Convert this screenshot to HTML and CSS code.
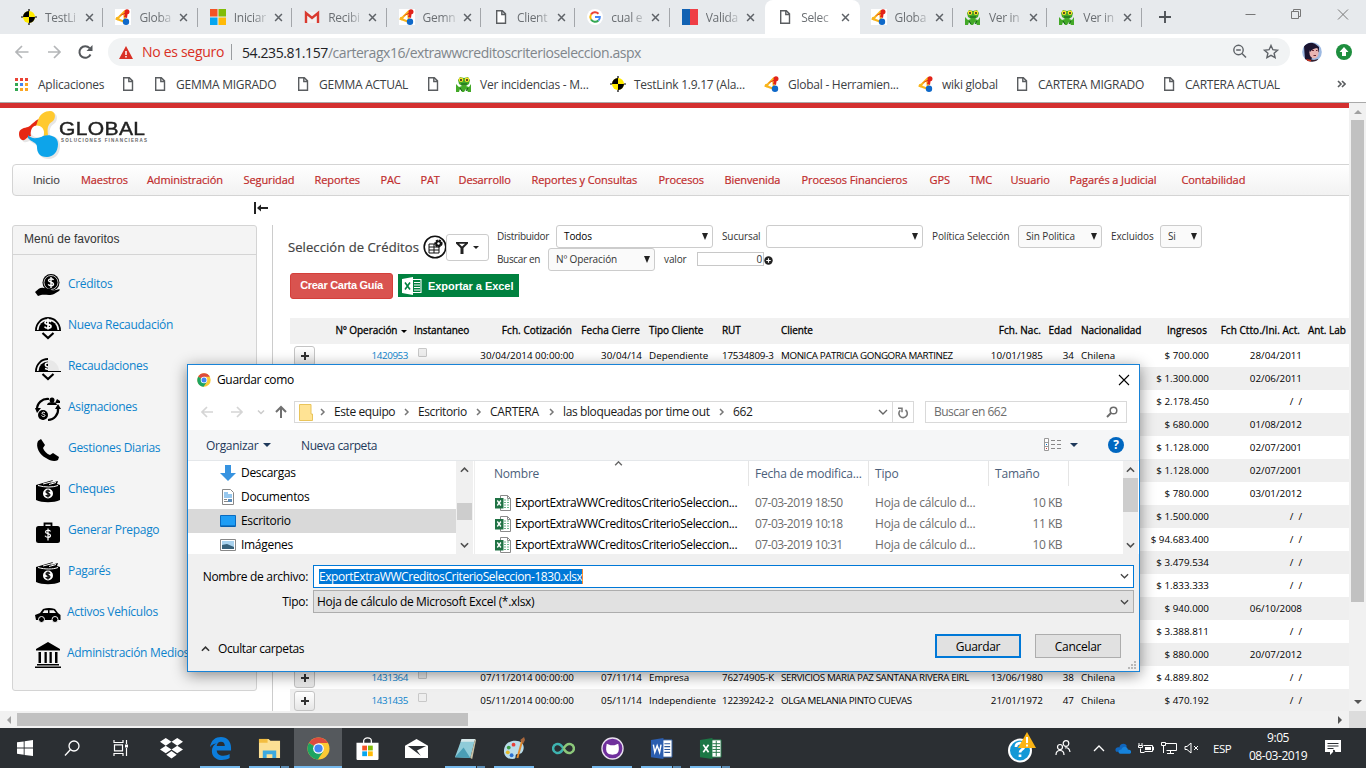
FILE: index.html
```html
<!DOCTYPE html>
<html lang="es">
<head>
<meta charset="utf-8">
<title>Selección de Créditos</title>
<link rel="stylesheet" href="styles.css">
</head>
<body>
<svg class="defs" aria-hidden="true">
  <symbol id="doc" viewBox="0 0 16 16"><path d="M3.7 1.7h5.6l3.2 3.2v9.4H3.7zM8.8 1.7v3.8h3.7" fill="#fff" stroke="#5a5d60" stroke-width="1.4"/></symbol>
  <symbol id="x" viewBox="0 0 10 10"><path d="M1.2 1.2l7.6 7.6M8.8 1.2L1.2 8.8" stroke="#5f6368" stroke-width="1.7" fill="none"/></symbol>
  <symbol id="target" viewBox="0 0 16 16"><path d="M8 0v16M0 8h16" stroke="#000" stroke-width="1.200"/><circle cx="8" cy="8" r="6" fill="#ffeb00"/><path d="M8 8V2A6 6 0 0 0 2 8zM8 8v6A6 6 0 0 0 14 8z" fill="#000"/></symbol>
  <symbol id="glob" viewBox="0 0 16 16"><path d="M9 3L2 10l8 3z" fill="none" stroke="#f9b51c" stroke-width="2"/><path d="M4 7l9-5-1 7-3-1 1-3z" fill="#e2231a"/><circle cx="12" cy="2.800" r="2.500" fill="#e2231a"/><circle cx="2.500" cy="9.500" r="1.800" fill="#f9b51c"/><circle cx="11" cy="12.700" r="3.200" fill="#0f69c9"/></symbol>
  <symbol id="frog" viewBox="0 0 16 16"><path d="M2 4L4 1l4 1 4-1 2 3-1 4-3 2 3 1 2-3v8h-3l-2-3-2 3H6l-2-3-1 3H0V8l3 3 3-1-3-2z" fill="#43a928"/><circle cx="5" cy="3.8" r="2.3" fill="#fbe02c"/><circle cx="11" cy="3.8" r="2.3" fill="#fbe02c"/><circle cx="5" cy="4" r="1" fill="#222"/><circle cx="11" cy="4" r="1" fill="#222"/><path d="M5 8h6M4 12l2 3M12 12l-2 3" stroke="#12591c"/></symbol>
  <symbol id="chrome" viewBox="0 0 24 24"><circle cx="12" cy="12" r="11.5" fill="#fbc934"/><path d="M12 12L2 6.3A11.5 11.5 0 0 1 22 6.3H12z" fill="#dd4b3e"/><path d="M12 12L2 6.3a11.5 11.5 0 0 0 9.3 17.2L17 15z" fill="#1da462"/><circle cx="12" cy="12" r="5.6" fill="#fff"/><circle cx="12" cy="12" r="4.3" fill="#4285f4"/></symbol>
  <symbol id="down" viewBox="0 0 10 6"><path d="M1 1l4 4 4-4" fill="none" stroke="currentColor" stroke-width="1.4"/></symbol>
  <symbol id="up" viewBox="0 0 10 6"><path d="M1 5l4-4 4 4" fill="none" stroke="currentColor" stroke-width="1.7"/></symbol>
  <symbol id="right" viewBox="0 0 6 10"><path d="M1 2l3 3-3 3" fill="none" stroke="#777" stroke-width="1.5"/></symbol>
  <symbol id="xls" viewBox="0 0 16 16"><path d="M5.500.5h7l3 3v12h-10z" fill="#fff" stroke="#8a8a8a"/><path d="M12.500.5v3h3" fill="none" stroke="#8a8a8a"/><path d="M9 5h5M9 7.500h5M9 10h5M9 12.500h5" stroke="#6fb48c" stroke-dasharray="2 1"/><path d="M0 3h8.500v10.500H0z" fill="#1f7244"/><path d="M2.300 5.500l3.600 5M5.900 5.500l-3.600 5" stroke="#fff" stroke-width="1.300"/></symbol>
  <symbol id="coin" viewBox="0 0 26 26"><path d="M1 16a12 12 0 0 1 24 0" fill="none" stroke="#000" stroke-width="1.800"/><path d="M3.500 16a9.500 9.500 0 0 1 19 0z" fill="#000"/><path d="M0 16.500h26" stroke="#000"/><path d="M16 8c-1-2-6-1.500-6 .7s6 1.300 6 3.600-5 2.700-6.500.3M13 4.500v11" stroke="#fff" stroke-width="1.700" fill="none"/><path d="M7.500 19l5.500 5 5.500-5" fill="none" stroke="#000" stroke-width="2.200"/></symbol>
  <symbol id="money" viewBox="0 0 26 24"><path d="M1 6L18 1l-2 3 7-2-1 3 3 1v15c-6 3-18 3-24 0z" fill="#000"/><path d="M3 6.500c7 2 15 2 20 0M8 5l9-2.300M14 5.500l7-2" stroke="#fff" fill="none"/><circle cx="13" cy="14.500" r="5" fill="#fff"/><path d="M15 12.600c-1-1.500-4-1.200-4 .4s4 1 4 2.800-3.500 1.800-4.300.3M13 10.500v8" stroke="#000" stroke-width="1.200" fill="none"/></symbol>
</svg>

<header class="browser">
  <div class="tabs">
    <div class="tab"><svg class="fav"><use href="#target"/></svg><span>TestLi</span><svg class="close"><use href="#x"/></svg></div>
    <div class="tab"><svg class="fav boxed"><use href="#glob"/></svg><span>Globa</span><svg class="close"><use href="#x"/></svg></div>
    <div class="tab"><svg class="fav" viewBox="0 0 16 16"><path d="M0 0h7.500v7.500H0z" fill="#f35325"/><path d="M8.500 0H16v7.500H8.500z" fill="#81bc06"/><path d="M0 8.500h7.500V16H0z" fill="#05a6f0"/><path d="M8.500 8.500H16V16H8.500z" fill="#ffba08"/></svg><span>Iniciar</span><svg class="close"><use href="#x"/></svg></div>
    <div class="tab"><svg class="fav" viewBox="0 0 16 16"><path d="M1 3h14v11H1z" fill="#f1f1f1"/><path d="M2 14V4l6 5 6-5v10" fill="none" stroke="#d93a30" stroke-width="2.400"/></svg><span>Recibi</span><svg class="close"><use href="#x"/></svg></div>
    <div class="tab"><svg class="fav boxed"><use href="#glob"/></svg><span>Gemn</span><svg class="close"><use href="#x"/></svg></div>
    <div class="tab"><svg class="fav"><use href="#doc"/></svg><span>Client</span><svg class="close"><use href="#x"/></svg></div>
    <div class="tab"><svg class="fav" viewBox="0 0 16 16"><circle cx="8" cy="8" r="8" fill="#fff"/><path d="M4 5.500A4.800 4.800 0 0 1 11.500 4.700" stroke="#ea4335" stroke-width="2" fill="none"/><path d="M4 5.500a4.800 4.800 0 0 0 0 5" stroke="#fbbc05" stroke-width="2" fill="none"/><path d="M4 10.500a4.800 4.800 0 0 0 7.400 1" stroke="#34a853" stroke-width="2" fill="none"/><path d="M8 8.100h4.800a4.500 4.500 0 0 1-1.400 3.400" stroke="#4285f4" stroke-width="2" fill="none"/></svg><span>cual e</span><svg class="close"><use href="#x"/></svg></div>
    <div class="tab last"><svg class="fav" viewBox="0 0 16 16"><path d="M0 0h8v16H0z" fill="#1262b3"/><path d="M8 0h8v16H8z" fill="#ef3e45"/></svg><span>Valida</span><svg class="close"><use href="#x"/></svg></div>
    <div class="tab active"><svg class="fav"><use href="#doc"/></svg><span>Selec</span><svg class="close"><use href="#x"/></svg></div>
    <div class="tab"><svg class="fav boxed"><use href="#glob"/></svg><span>Globa</span><svg class="close"><use href="#x"/></svg></div>
    <div class="tab"><svg class="fav"><use href="#frog"/></svg><span>Ver in</span><svg class="close"><use href="#x"/></svg></div>
    <div class="tab"><svg class="fav"><use href="#frog"/></svg><span>Ver in</span><svg class="close"><use href="#x"/></svg></div>
    <svg class="newtab" viewBox="0 0 12 12"><path d="M6 0v12M0 6h12" stroke="#4f5357" stroke-width="1.900"/></svg>
    <svg class="winbtns" viewBox="0 0 110 34"><path d="M6.500 14.500h10M99 9.500l10 10M109 9.500l-10 10" stroke="#777" fill="none"/><path d="M52.500 11.500h7v7h-7zM54.500 11v-1.500h7v7H60" stroke="#777" fill="none"/></svg>
  </div>
  <div class="toolbar">
    <svg class="navbtns" viewBox="0 0 108 36"><path d="M28.500 18h-12M22 12l-6 6 6 6M48 18h12M54 12l6 6-6 6" fill="none" stroke="#b4b6b8" stroke-width="1.700"/><path d="M90.500 20.500a5.800 5.800 0 1 1-.9-6.300" fill="none" stroke="#55585c" stroke-width="2"/><path d="M92.500 11v6h-6z" fill="#55585c"/></svg>
    <div class="omnibox">
      <svg class="warn" viewBox="0 0 14 13"><path d="M7 0l7 13H0z" fill="#d93025"/><path d="M7 5v4M7 10v1.500" stroke="#fff" stroke-width="1.500"/></svg>
      <span class="insecure">No es seguro</span><span class="host">54.235.81.157</span><span class="path">/carteragx16/extrawwcreditoscriterioseleccion.aspx</span>
      <svg class="boxicons" viewBox="0 0 50 20"><circle cx="6.500" cy="8" r="4.700" fill="none" stroke="#5f6368" stroke-width="1.400"/><path d="M10 11.500l4 4M4.200 8h4.600" stroke="#5f6368" stroke-width="1.500"/><path d="M39 3.500l1.900 4.200 4.600.5-3.400 3 1 4.500-4.100-2.300-4.100 2.300 1-4.500-3.400-3 4.600-.5z" fill="none" stroke="#5f6368" stroke-width="1.400"/></svg>
    </div>
    <svg class="avatar" viewBox="0 0 20 20"><defs><clipPath id="ac"><circle cx="10" cy="10" r="9.800"/></clipPath></defs><g clip-path="url(#ac)"><path d="M0 0h20v20H0z" fill="#9db9e2"/><path d="M2 4Q9-3 17 5v5l-6 2-2 7-6-1z" fill="#1b1430"/><ellipse cx="12" cy="10.500" rx="4.600" ry="6" fill="#eab4b2"/><path d="M6 3q5-2 10 3-5 0-8 4z" fill="#1b1430"/><path d="M10 8.500h2M14 8.500h1.500M11.500 13.500h2.500" stroke="#6b2a35"/><path d="M3 20l3-3 6 1 4-1v3z" fill="#38202c"/><path d="M4 17l5 1v2H5z" fill="#c8321e"/></g></svg>
    <svg class="update" viewBox="0 0 16 16"><circle cx="8" cy="8" r="8" fill="#1e8e3e"/><path d="M8 3l4.500 5H10v4H6V8H3.500z" fill="#fff"/></svg>
  </div>
  <nav class="bookmarks">
    <a><svg class="apps" viewBox="0 0 13 13"><path d="M0 0h3v3H0zM5 0h3v3H5zM10 0h3v3h-3z" fill="#ea4335"/><path d="M0 5h3v3H0zM0 10h3v3H0z" fill="#34a853"/><path d="M5 5h3v3H5z" fill="#4285f4"/><path d="M10 5h3v3h-3zM5 10h3v3H5zM10 10h3v3h-3z" fill="#fba724"/></svg>Aplicaciones</a>
    <a><svg><use href="#doc"/></svg></a>
    <a><svg><use href="#doc"/></svg>GEMMA MIGRADO</a>
    <a><svg><use href="#doc"/></svg>GEMMA ACTUAL</a>
    <a><svg><use href="#doc"/></svg></a>
    <a><svg><use href="#frog"/></svg>Ver incidencias - M...</a>
    <a><svg><use href="#target"/></svg>TestLink 1.9.17 (Ala...</a>
    <a><svg><use href="#glob"/></svg>Global - Herramien...</a>
    <a><svg><use href="#glob"/></svg>wiki global</a>
    <a><svg><use href="#doc"/></svg>CARTERA MIGRADO</a>
    <a><svg><use href="#doc"/></svg>CARTERA ACTUAL</a>
    <a class="more"><svg viewBox="0 0 9 8"><path d="M1 1l3 3-3 3M5 1l3 3-3 3" fill="none" stroke="#5a5d60" stroke-width="1.600"/></svg></a>
  </nav>
</header>

<div class="viewport">
  <div class="page">
    <div class="logo">
      <svg viewBox="0 0 46 54"><g transform="translate(2 2)" fill="#e6e6e6"><path d="M0 24C0 18 6 18 9 17c4-2 6-6 11-8 1-5 6-8 11-8 6 0 6 7 3 10-5 3-6 7-5 13 6 0 10 3 10 10 0 8-5 13-11 13-8 0-10-5-10-10 0-4-6-5-9-8-2 0-4 2-6 1-2-1-3-3-3-6z"/></g><path d="M0 24c0-6 6-6 9-7 4-2 6-6 11-8l-2 7c-6 2-7 6-6 10-4 0-5 5-9 4-2-1-3-3-3-6z" fill="#e52713"/><path d="M19 10c2-6 7-9 12-9 6 0 6 7 3 10-5 3-6 6-5 14-2 1-3 2-4 1 0-6-2-9-8-10z" fill="#ffc92e"/><path d="M9 25c3 4 9 4 15 1 6-2 15 0 15 8s-5 13-11 13c-8 0-10-5-10-10s-6-5-9-9z" fill="#0da4ea"/><path d="M18 15.500c4 0 7 3 7 7 0 2-1 4-3 4.500-5 1.500-10-1-10-4.500 0-4 2-7 6-7z" fill="#fff"/></svg>
      <div class="wordmark"><b>GLOBAL</b><i>SOLUCIONES FINANCIERAS</i></div>
    </div>
    <nav class="menu"><a class="on">Inicio</a><a>Maestros</a><a>Administración</a><a>Seguridad</a><a>Reportes</a><a>PAC</a><a>PAT</a><a>Desarrollo</a><a>Reportes y Consultas</a><a>Procesos</a><a>Bienvenida</a><a>Procesos Financieros</a><a>GPS</a><a>TMC</a><a>Usuario</a><a>Pagarés a Judicial</a><a>Contabilidad</a></nav>
    <div class="collapse"><svg viewBox="0 0 14 12"><path d="M1 0v12" stroke="#222" stroke-width="2"/><path d="M4 6h10" stroke="#222" stroke-width="2"/><path d="M3 6l4-3.500v7z" fill="#222"/></svg></div>
    <div class="columns">
      <aside class="side">
        <h2>Menú de favoritos</h2>
        <ul>
          <li><svg viewBox="0 0 26 26"><circle cx="16" cy="9.500" r="8.500" fill="#000"/><circle cx="16" cy="9.500" r="7" fill="none" stroke="#f4f4f4" stroke-width=".8"/><path d="M18.500 7c-1-2-5-1.300-5 .5s5 1.300 5 3.500-4 2.300-5.300.3M16 4v11" stroke="#fff" stroke-width="1.400" fill="none"/><path d="M0 19c4-4 6-5 9-4l6 1c2 0 2 2 0 2l6-1c3-1 5-1 3 1l-5 3c-4 2-10 0-13 1l-3 1z" fill="#000"/></svg>Créditos</li>
          <li><svg><use href="#coin"/></svg>Nueva Recaudación</li>
          <li><svg viewBox="0 0 26 26"><path d="M1 16A12 12 0 0 1 13 4" fill="none" stroke="#000" stroke-width="1.800"/><path d="M3.500 16A9.500 9.500 0 0 1 13 6.500V16z" fill="#000"/><path d="M13 5a11 11 0 0 1 11 11H13z" fill="#e8e8e8"/><path d="M0 16.500h26" stroke="#000"/><path d="M13 8c-3 0-4 3 0 4M13 14.500l-3-1" stroke="#fff" stroke-width="1.500" fill="none"/><path d="M7.500 19l5.500 5 5.500-5" fill="none" stroke="#000" stroke-width="2.200"/></svg>Recaudaciones</li>
          <li><svg viewBox="0 0 26 26"><path d="M14 3A10.500 10.500 0 0 0 2 14M5 20a10.500 10.500 0 0 0 4 3M13 24a10.500 10.500 0 0 0 10-12" stroke="#000" stroke-width="2.200" fill="none"/><path d="M0 12l6 0-4 5zM20 13l6 0-3-5z"/><circle cx="8" cy="19" r="5"/><circle cx="17" cy="4" r="2.500"/><path d="M12 9c0-4 10-4 10 0zM20 7h5V5l-3-2z"/><path d="M10 17c-1-1.500-3-1-3 .3s3 .8 3 2.200-2.500 1.500-3.500 0" stroke="#fff" fill="none"/></svg>Asignaciones</li>
          <li><svg viewBox="0 0 26 26"><path d="M3 4l3-2 4 6-2 3c1 3 4 6 7 7l3-2 6 4-1 3c-3 2-8 1-12-2C5 18 0 10 3 4z"/></svg>Gestiones Diarias</li>
          <li><svg><use href="#money"/></svg>Cheques</li>
          <li><svg viewBox="0 0 26 26"><path d="M9.500 7V4.500h7V7" fill="none" stroke="#000" stroke-width="1.800"/><rect x="1" y="7" width="24" height="17" rx="2.500"/><path d="M15.500 12.500c-1-2-5-1.500-5 .5s5 1.300 5 3.500-4.200 2.500-5.500.3M13 9.500v12" stroke="#fff" stroke-width="1.200" fill="none"/></svg>Generar Prepago</li>
          <li><svg><use href="#money"/></svg>Pagarés</li>
          <li class="wide"><svg viewBox="0 0 26 26"><path d="M0 14l5-2 3-4c4-1.500 8-1.500 12 0l3 4 2.500 2v5H1z"/><path d="M7.500 12l1.800-2.700H13V12zM14.500 12V9.300h4.300L21 12z" fill="#f4f4f4"/><circle cx="6.500" cy="18.500" r="3" stroke="#f4f4f4"/><circle cx="20" cy="18.500" r="3" stroke="#f4f4f4"/></svg>Activos Vehículos</li>
          <li class="wide"><svg viewBox="0 0 26 26"><path d="M1 7l12-7 12 7v1.500H1zM2 22h22v1.500H2zM0 24.500h26V26H0zM3.500 10H6v11H3.500zM9.500 10h2.300v11H9.500zM14.500 10h2.300v11h-2.300zM20 10h2.500v11H20z"/></svg>Administración Medios</li>
        </ul>
      </aside>
      <main class="main">
        <div class="filters">
          <h1>Selección de Créditos</h1>
          <svg class="round" viewBox="0 0 24 24"><circle cx="12" cy="12" r="10.800" fill="#fff" stroke="#111" stroke-width="1.600"/><path d="M6 9h10v9H6zM6 12h10M6 15h10M11 9v9" fill="none" stroke="#111" stroke-width="1"/><circle cx="15.500" cy="8.500" r="3" fill="#111" stroke="#111" stroke-width="2.200" stroke-dasharray="2 .8"/><circle cx="15.500" cy="8.500" r="1.200" fill="#fff"/></svg>
          <button class="funnel"><svg viewBox="0 0 24 12"><path d="M0 0h12v1.500L7.500 6v6h-3V6L0 1.500z" fill="#222"/><path d="M3 1.700h6L6 4.500z" fill="#fff"/><path d="M17 4h6l-3 3z" fill="#222"/></svg></button>
          <div class="fields">
            <div class="line"><label class="l1">Distribuidor</label><span class="sel s1">Todos</span><label class="l2">Sucursal</label><span class="sel s2"></span><label class="l3">Política Selección</label><span class="sel s3">Sin Politica</span><label class="l4">Excluidos</label><span class="sel s4">Si</span></div>
            <div class="line"><label class="l5">Buscar en</label><span class="sel s5">Nº Operación</span><label class="l6">valor</label><span class="num">0</span><svg class="plusc" viewBox="0 0 10 10"><circle cx="5" cy="5" r="4.700" fill="#222"/><path d="M5 2.500v5M2.500 5h5" stroke="#fff" stroke-width="1.300"/></svg></div>
          </div>
        </div>
        <div class="actions">
          <button class="red">Crear Carta Guía</button>
          <button class="green"><svg viewBox="0 0 20 18"><path d="M0 2l11-2v18L0 16z" fill="#fff"/><path d="M11 2.500h8v13h-8M12 5.500h6M12 8h6M12 10.500h6M12 13h6" fill="none" stroke="#fff" stroke-width="1.100"/><path d="M3 5.500l5 7M8 5.500l-5 7" stroke="#00813f" stroke-width="1.600"/></svg>Exportar a Excel</button>
        </div>
        <div class="grid">
          <div class="row head"><span></span><span class="c-op">Nº Operación <i></i></span><span class="in">Instantaneo</span><span class="r">Fch. Cotización</span><span class="r">Fecha Cierre</span><span class="t">Tipo Cliente</span><span class="t">RUT</span><span class="t">Cliente</span><span class="r">Fch. Nac.</span><span class="r">Edad</span><span class="t">Nacionalidad</span><span class="r">Ingresos</span><span class="r">Fch Ctto./Ini. Act.</span><span class="in">Ant. Lab</span></div>
          <div class="row"><span class="plus"></span><span class="r link">1420953</span><span class="chk"></span><span class="r">30/04/2014 00:00:00</span><span class="r">30/04/14</span><span class="t">Dependiente</span><span class="t rut">17534809-3</span><span class="t name">MONICA PATRICIA GONGORA MARTINEZ</span><span class="r">10/01/1985</span><span class="r">34</span><span class="t">Chilena</span><span class="r">$ 700.000</span><span class="r">28/04/2011</span></div>
          <div class="row"><span class="r ing">$ 1.300.000</span><span class="r">02/06/2011</span></div>
          <div class="row"><span class="r ing">$ 2.178.450</span><span class="r">/ &nbsp;/</span></div>
          <div class="row"><span class="r ing">$ 680.000</span><span class="r">01/08/2012</span></div>
          <div class="row"><span class="r ing">$ 1.128.000</span><span class="r">02/07/2001</span></div>
          <div class="row"><span class="r ing">$ 1.128.000</span><span class="r">02/07/2001</span></div>
          <div class="row"><span class="r ing">$ 780.000</span><span class="r">03/01/2012</span></div>
          <div class="row"><span class="r ing">$ 1.500.000</span><span class="r">/ &nbsp;/</span></div>
          <div class="row"><span class="r ing">$ 94.683.400</span><span class="r">/ &nbsp;/</span></div>
          <div class="row"><span class="r ing">$ 3.479.534</span><span class="r">/ &nbsp;/</span></div>
          <div class="row"><span class="r ing">$ 1.833.333</span><span class="r">/ &nbsp;/</span></div>
          <div class="row"><span class="r ing">$ 940.000</span><span class="r">06/10/2008</span></div>
          <div class="row"><span class="r ing">$ 3.388.811</span><span class="r">/ &nbsp;/</span></div>
          <div class="row"><span class="r ing">$ 880.000</span><span class="r">20/07/2012</span></div>
          <div class="row"><span class="plus"></span><span class="r link">1431364</span><span class="chk"></span><span class="r">07/11/2014 00:00:00</span><span class="r">07/11/14</span><span class="t">Empresa</span><span class="t rut">76274905-K</span><span class="t name">SERVICIOS MARIA PAZ SANTANA RIVERA EIRL</span><span class="r">13/06/1980</span><span class="r">38</span><span class="t">Chilena</span><span class="r">$ 4.889.802</span><span class="r">/ &nbsp;/</span></div>
          <div class="row"><span class="plus"></span><span class="r link">1431435</span><span class="chk"></span><span class="r">05/11/2014 00:00:00</span><span class="r">05/11/14</span><span class="t">Independiente</span><span class="t rut">12239242-2</span><span class="t name">OLGA MELANIA PINTO CUEVAS</span><span class="r">21/01/1972</span><span class="r">47</span><span class="t">Chilena</span><span class="r">$ 470.192</span><span class="r">/ &nbsp;/</span></div>
        </div>
      </main>
    </div>
  </div>
  <div class="vscroll"><i class="au"></i><b></b><i class="ad"></i></div>
  <div class="hscroll"><i class="al"></i><b></b><i class="ar"></i></div>
  <div class="corner"></div>
</div>

<section class="dialog">
  <div class="dtitle"><svg class="dchrome"><use href="#chrome"/></svg>Guardar como<svg class="dclose" viewBox="0 0 12 12"><path d="M1 1l10 10M11 1L1 11" stroke="#000" stroke-width="1.100"/></svg></div>
  <div class="dnav">
    <svg class="arrows" viewBox="0 0 88 24"><path d="M13 12H2M7 7l-5 5 5 5M31 12h11M37 7l5 5-5 5" stroke="#d5d5d5" stroke-width="1.700" fill="none"/><path d="M58 10.500l3 3 3-3" stroke="#ccc" stroke-width="1.500" fill="none"/><path d="M81 18V7M76 12l5-5 5 5" stroke="#707070" stroke-width="2" fill="none"/></svg>
    <div class="crumbs"><svg class="folder" viewBox="0 0 14 17"><path d="M.5.500h11.500v9.500h1.500v6.500H.5z" fill="#ffe394" stroke="#e9c45b"/></svg><svg class="ch"><use href="#right"/></svg><span class="c1">Este equipo</span><svg class="ch"><use href="#right"/></svg><span class="c2">Escritorio</span><svg class="ch"><use href="#right"/></svg><span class="c3">CARTERA</span><svg class="ch"><use href="#right"/></svg><span class="c4">las bloqueadas por time out</span><svg class="ch"><use href="#right"/></svg><span>662</span><svg class="cd"><use href="#down"/></svg></div>
    <div class="refresh"><svg viewBox="0 0 12 12"><path d="M3.300 3.300A4.200 4.200 0 1 0 8.500 3" fill="none" stroke="#777" stroke-width="1.600"/><path d="M1 1.200h4v4" fill="none" stroke="#777" stroke-width="1.500"/></svg></div>
    <div class="search">Buscar en 662<svg viewBox="0 0 12 12"><circle cx="7.500" cy="4.500" r="3.300" fill="none" stroke="#6b6b6b" stroke-width="1.500"/><path d="M5 7l-4 4" stroke="#6b6b6b" stroke-width="1.900"/></svg></div>
  </div>
  <div class="dtools"><span class="org">Organizar</span><i class="tri"></i><span class="newf">Nueva carpeta</span>
    <svg class="views" viewBox="0 0 18 14"><path d="M.5.500h4v12h-4zM.5 4.500h4M.5 8.500h4" fill="#fff" stroke="#999"/><path d="M7 2.500h10M7 6.500h10M7 10.500h10" stroke="#888" stroke-dasharray="4 2"/><path d="M2 6.500h1" stroke="#0078d7"/><path d="M2 10.500h1" stroke="#c33"/></svg><i class="tri"></i>
    <span class="help">?</span></div>
  <div class="dbody">
    <div class="tree">
      <div><svg viewBox="0 0 16 16"><path d="M5 0h6v8h5l-8 8-8-8h5z" fill="#3793e0"/></svg>Descargas</div>
      <div><svg viewBox="0 0 16 16"><path d="M2.500.500h8l3 3v12h-11z" fill="#fff" stroke="#888"/><path d="M4 6h8M4 4h4M4 8h8" stroke="#2e90dd"/><path d="M4 10.500h3M4 12.500h8" stroke="#888"/><path d="M8 10h4v3H8z" fill="#5a8bb8"/></svg>Documentos</div>
      <div class="sel-row"><svg viewBox="0 0 16 16"><path d="M.5 2.500h15v11H.5z" fill="#1e9df5" stroke="#0a6abf"/><path d="M1 13h14" stroke="#04549f"/></svg>Escritorio</div>
      <div><svg viewBox="0 0 16 16"><path d="M.5 2.500h15v11H.5z" fill="#fff" stroke="#888"/><path d="M2 4h12v8H2z" fill="#a9d2ee"/><path d="M2 8l5-1 7 3v2H2z" fill="#37617a"/></svg>Imágenes</div>
    </div>
    <div class="wscroll t1"><svg><use href="#up"/></svg><b></b><svg class="bot" viewBox="0 0 10 6"><path d="M1 1l4 4 4-4" fill="none" stroke="#505050" stroke-width="1.800"/></svg></div>
    <div class="files">
      <svg class="sort"><use href="#up"/></svg>
      <div class="fh"><span>Nombre</span><span>Fecha de modifica...</span><span>Tipo</span><span>Tamaño</span></div>
      <div class="fr"><span><svg><use href="#xls"/></svg>ExportExtraWWCreditosCriterioSeleccion...</span><span class="dt">07-03-2019 18:50</span><span>Hoja de cálculo d...</span><span>10 KB</span></div>
      <div class="fr"><span><svg><use href="#xls"/></svg>ExportExtraWWCreditosCriterioSeleccion...</span><span class="dt">07-03-2019 10:18</span><span>Hoja de cálculo d...</span><span>11 KB</span></div>
      <div class="fr"><span><svg><use href="#xls"/></svg>ExportExtraWWCreditosCriterioSeleccion...</span><span class="dt">07-03-2019 10:31</span><span>Hoja de cálculo d...</span><span>10 KB</span></div>
    </div>
    <div class="wscroll t2"><svg><use href="#up"/></svg><b></b><svg class="bot" viewBox="0 0 10 6"><path d="M1 1l4 4 4-4" fill="none" stroke="#505050" stroke-width="1.800"/></svg></div>
  </div>
  <div class="dform">
    <label>Nombre de archivo:</label><div class="inp focus"><mark>ExportExtraWWCreditosCriterioSeleccion-1830.xlsx</mark><svg><use href="#down"/></svg></div>
    <label>Tipo:</label><div class="inp combo">Hoja de cálculo de Microsoft Excel (*.xlsx)<svg><use href="#down"/></svg></div>
  </div>
  <div class="dfoot"><svg class="hidec"><use href="#up"/></svg><span>Ocultar carpetas</span><button class="prim">Guardar</button><button>Cancelar</button></div>
  <svg class="grip" viewBox="0 0 8 8"><path d="M6 0h2v2H6zM3 3h2v2H3zM6 3h2v2H6zM0 6h2v2H0zM3 6h2v2H3zM6 6h2v2H6z" fill="#b8b8b8"/></svg>
</section>

<footer class="taskbar">
  <div class="slot"><svg viewBox="0 0 16 16"><path d="M0 2.300l6.700-.9v6.200H0zM7.600 1.200L16 0v7.600H7.600zM0 8.500h6.700v6.200L0 13.800zM7.600 8.500H16V16l-8.400-1.100z" fill="#fff"/></svg></div>
  <div class="slot s"><svg viewBox="0 0 16 16"><circle cx="10" cy="6" r="5" fill="none" stroke="#fff" stroke-width="1.300"/><path d="M6.500 9.500L1 15.500" stroke="#fff" stroke-width="1.300"/></svg></div>
  <div class="slot s"><svg viewBox="0 0 16 16"><path d="M1 0v2.500h9V0M1 16v-2.500h9V16M1.500 4.800h8v6h-8zM13.500 0v4M13.500 8v8" fill="none" stroke="#fff" stroke-width="1.200"/><path d="M12 4.500h3v3h-3z" fill="#fff"/></svg></div>
  <div class="slot big"><svg viewBox="0 0 24 22"><path d="M6 0l6 4-6 4-6-4zM18 0l6 4-6 4-6-4zM6 8l6 4-6 4-6-4zM18 8l6 4-6 4-6-4zM12 13.500l5.500 4L12 21.500l-5.500-4z" fill="#fff"/></svg></div>
  <div class="slot run big"><svg viewBox="0 0 24 24"><path d="M1 11C2 3 7 0 12.500 0 19 0 23 5 23 11v3H8c.5 4 3 5.500 7 5.500 2.500 0 4.500-.5 6.500-1.700V22c-2.500 1.500-5 2-8 2C7 24 3 20 3 14.500c0-3.500 2-6.500 5-8C3.500 7.500 2 9 1 11zm7-1.500h8.500C16.500 6.500 15 5 12.500 5S8.500 6.500 8 9.500z" fill="#0c7ddb"/></svg></div>
  <div class="slot run more big"><svg viewBox="0 0 24 24"><path d="M1 2h10l2 2h10v18H1z" fill="#fce094"/><path d="M1 2h9v4H1z" fill="#f3bd40"/><path d="M5 22v-8h14v8h-4v-4H9v4z" fill="#3ba9e0"/></svg></div>
  <div class="slot on big"><svg><use href="#chrome"/></svg></div>
  <div class="slot big"><svg viewBox="0 0 24 24"><path d="M8 7V4c0-4 8-4 8 0v3" fill="none" stroke="#fff" stroke-width="1.300"/><path d="M.5 6h23v17c0 1-1 1-1 1h-21s-1 0-1-1z" fill="#fff"/><path d="M6.500 9h5v5h-5z" fill="#f35325"/><path d="M12.500 9h5v5h-5z" fill="#81bc06"/><path d="M6.500 15h5v5h-5z" fill="#05a6f0"/><path d="M12.500 15h5v5h-5z" fill="#ffba08"/></svg></div>
  <div class="slot big"><svg viewBox="0 0 24 24"><path d="M0 9l12-7 12 7v13H0z" fill="#fff"/><path d="M3 9.500h19L12.500 14l4 5.500L3 9.500z" fill="#2b2f33"/></svg></div>
  <div class="slot run more big"><svg viewBox="0 0 24 24"><path d="M8 2l14 0-5 20L1 21z" fill="#8fcbd8"/><path d="M8 2h14l-1 3H7z" fill="#d7e8ea"/><path d="M22 2l1 1-4 20-2-1z" fill="#c9c3a8"/><path d="M1 21l9-10 7 11z" fill="#4a9eb5"/></svg></div>
  <div class="slot run big"><svg viewBox="0 0 24 24"><path d="M1 15C1 7 7 4 13 4c7 0 10 5 8 10s-5 3-7 4 1 5-4 5c-6 0-9-4-9-8z" fill="#b9dcea"/><circle cx="6" cy="11" r="2" fill="#3a9b45"/><circle cx="11" cy="8" r="2" fill="#e8403a"/><circle cx="5" cy="16" r="2" fill="#e4ba2b"/><circle cx="9" cy="19" r="2" fill="#2c70cf"/><path d="M20 4l-5 18" stroke="#e28a2c" stroke-width="2"/><path d="M18 3l4-3 1 3-2 4z" fill="#a9673c"/></svg></div>
  <div class="slot big"><svg viewBox="0 0 24 24"><path d="M12 12C9 7 6 7 4.500 7.500 0 9 0 15 4.500 16.500 7 17.500 9.500 16 12 12" fill="none" stroke="#3eb3b0" stroke-width="2.600"/><path d="M12 12c3-5 6-5 7.500-4.500 4.500 1.500 4.500 7.500 0 9C17 17.500 14.500 16 12 12" fill="none" stroke="#8cc87a" stroke-width="2.600"/></svg></div>
  <div class="slot run big"><svg viewBox="0 0 24 24"><circle cx="12" cy="12" r="11" fill="#6f2f9c" stroke="#e8e0ee" stroke-width="1.400"/><path d="M6 7l4 1.500h4L18 7c1 5 1 8-1 10-3 2-7 2-10 0-2-2-2-5-1-10z" fill="#fff"/></svg></div>
  <div class="slot run more big"><svg viewBox="0 0 24 24"><path d="M12 3h11v18H12z" fill="#fff" stroke="#2b579a"/><path d="M15 7h6M15 10h6M15 13h6M15 16h6" stroke="#2b579a" stroke-width="1.200"/><path d="M1 3l13-2v22L1 21z" fill="#2b5eb0"/><path d="M3.500 8l1.500 8 2.500-7L10 16l1.500-8" fill="none" stroke="#fff" stroke-width="1.500"/></svg></div>
  <div class="slot run more big"><svg viewBox="0 0 24 24"><path d="M12 3h11v18H12z" fill="#fff" stroke="#217346"/><path d="M14 7h8M14 10h8M14 13h8M14 16h8M18 4v16" stroke="#217346"/><path d="M1 3l13-2v22L1 21z" fill="#1b7745"/><path d="M4.500 8l5.500 8M10 8l-5.500 8" stroke="#fff" stroke-width="1.700"/></svg></div>
  <div class="tray">
    <svg class="tq" viewBox="0 0 32 32"><circle cx="13" cy="18.500" r="11" fill="#1298d6" stroke="#fff" stroke-width="2"/><path d="M9 15c0-5 8-5 8-.5 0 3-4 3-4 6M13 22.500v2.500" stroke="#fff" stroke-width="2.700" fill="none"/><path d="M20 0l9 16H11z" fill="#fbb414"/><path d="M20 5v6M20 12.500v2" stroke="#fff" stroke-width="2"/></svg>
    <svg class="tp" viewBox="0 0 16 16"><circle cx="5" cy="7" r="2.500" fill="none" stroke="#fff" stroke-width="1.200"/><circle cx="11" cy="3.500" r="2.800" fill="none" stroke="#fff" stroke-width="1.200"/><path d="M1 15c0-6 8-6 8 0M10 8c3-1 4.500 1 5 4" fill="none" stroke="#fff" stroke-width="1.200"/></svg>
    <svg class="tu" viewBox="0 0 12 8"><path d="M1 7l5-5 5 5" fill="none" stroke="#fff" stroke-width="1.300"/></svg>
    <svg class="to" viewBox="0 0 16 10"><path d="M2 8C0 5 3 3 5 4 6-1 12 0 12 3l-7 5z" fill="#1066bd"/><path d="M6 10C3 9 4 6 7 6c1-4 6-3 6 0 4 0 4 4 1 4z" fill="#1683dc"/></svg>
    <svg class="ti" viewBox="0 0 16 12"><path d="M5.500 3.500h9v6h-8M14.500 5h1v3h-1M2.500 6.500v4h4M1 1v2M4 1v2M.5 3.500h4v2h-4z" fill="none" stroke="#fff"/><path d="M7 5h6v3H7z" fill="#fff"/></svg>
    <svg class="ti" viewBox="0 0 16 12"><path d="M4.500 1.500h11v7h-10M9.500 9v2.500M6 11.500h7M.5.500h4v3h-4zM2.500 4v7" fill="none" stroke="#fff"/></svg>
    <svg class="ti" viewBox="0 0 16 12"><path d="M1 4.500h2L7 1v10L3 7.500H1zM10 4l4 4M14 4l-4 4" fill="none" stroke="#fff"/></svg>
    <span class="lang">ESP</span>
    <span class="clock">9:05<br>08-03-2019</span>
    <svg class="tn" viewBox="0 0 16 16"><path d="M0 0h16v12H8l-3 3v-3H0z" fill="#fff"/><path d="M2.500 3.500h11M2.500 6h11M2.500 8.500h6" stroke="#2b2f33"/><path d="M9 10a4 4 0 0 0 6 4" fill="none" stroke="#2b2f33" stroke-width="2"/></svg>
  </div>
</footer>
</body>
</html>
```

FILE: styles.css
```css
* { box-sizing: border-box; }
body { margin: 0; width: 1366px; height: 768px; overflow: hidden; position: relative; background: #fff; font-family: "Open Sans", "Noto Sans", sans-serif; font-size: 12px; color: #000; white-space: nowrap; }
svg { flex: none; display: block; }
button { font-family: inherit; padding: 0; margin: 0; }
.defs { position: absolute; width: 0; height: 0; }

/* browser frame */
.browser { height: 102px; }
.tabs { height: 34px; background: #e7eaed; display: flex; align-items: center; padding-left: 9px; }
.tab { width: 94.4px; height: 34px; display: flex; align-items: center; padding-left: 12px; position: relative; color: #6b6f73; letter-spacing: -.3px; }
.tab::after { content: ""; position: absolute; right: 0; top: 8px; width: 1px; height: 19px; background: #a3a6aa; }
.tab.last::after, .tab.active::after { display: none; }
.tab.active { background: #fff; border-radius: 8px 8px 0 0; margin: 0 -1px 0 1px; }
.tab span { width: 38px; margin-left: 8px; -webkit-mask: linear-gradient(90deg, #000 50%, rgba(0,0,0,.15) 90%); mask: linear-gradient(90deg, #000 50%, rgba(0,0,0,.15) 90%); }
.fav { width: 16px; height: 16px; }
.boxed { background: #fff; }
.close { width: 9px; height: 9px; margin-left: 2px; }
.newtab { width: 12px; height: 12px; margin-left: 17px; }
.winbtns { width: 110px; height: 34px; margin-left: auto; margin-right: 17px; }
.toolbar { height: 36px; display: flex; align-items: center; }
.navbtns { width: 108px; height: 36px; }
.omnibox { width: 1182px; height: 28px; border-radius: 14px; background: #f1f3f4; display: flex; align-items: center; padding-left: 11px; font-size: 14px; letter-spacing: -.46px; }
.warn { width: 14px; height: 13px; margin-right: 9px; }
.insecure { color: #d93025; width: 90px; border-right: 1px solid #9a9da0; height: 16px; line-height: 15px; margin-right: 10px; letter-spacing: -.3px; }
.host { color: #202124; letter-spacing: -.4px; }
.path { color: #80868b; }
.boxicons { width: 50px; height: 20px; margin-left: auto; margin-right: 8px; }
.avatar { width: 20px; height: 20px; margin-left: 12px; }
.update { width: 16px; height: 16px; margin-left: 14px; }
.bookmarks { height: 32px; padding-left: 15px; margin-top: -2px; display: grid; grid-template-columns: 105px 32px 143px 130px 31px 154px 154px 154px 96px 147px 176px 20px; align-items: center; color: #3c4043; letter-spacing: -.25px; }
.bookmarks a { display: flex; align-items: center; }
.bookmarks svg { width: 16px; height: 16px; margin-right: 8px; }
.bookmarks svg.apps { width: 13px; height: 13px; margin-right: 10px; }
.bookmarks .more svg { width: 9px; height: 8px; }

/* page viewport */
.viewport { height: 626px; display: grid; grid-template: 609px 17px / 1349px 17px; }
.page { overflow: hidden; border-top: 1px solid #a9a9a9; box-shadow: inset 0 5px #d32f2f; padding: 7px 0 0 12px; }
.logo { height: 54px; display: flex; padding-left: 7px; }
.logo > svg { width: 46px; height: 54px; }
.wordmark { margin: 9px 0 0 -6px; width: 92px; }
.wordmark b { display: block; font: 400 18px/20px "Liberation Sans", sans-serif; -webkit-text-stroke: .4px #222; letter-spacing: .3px; color: #222; transform: scaleX(1.170); transform-origin: 0 0; }
.wordmark i { display: block; font: 700 4.500px/5px "Liberation Sans", sans-serif; letter-spacing: 1.150px; color: #666; margin: -1px 0 0 2px; }
.menu { height: 32px; width: 1380px; border: 1px solid #d4d4d4; border-radius: 4px; background: linear-gradient(#fff, #f2f2f2); padding: 0 0 2px 20px; display: grid; grid-template-columns: 48px 66px 96.500px 71px 66px 40px 38px 73px 127px 66px 77px 128px 40px 41px 59px 112px 80px; align-items: center; color: #bf2b2b; font-size: 11px; letter-spacing: -.1px; -webkit-text-stroke: .2px; }
.menu .on { color: #444; }
.collapse { height: 29px; padding: 6px 0 0 242px; }
.collapse svg { width: 14px; height: 12px; }
.columns { display: flex; height: 490px; }
.side { width: 245px; height: 466px; background: #f4f4f4; border: 1px solid #d4d4d4; border-radius: 3px; }
.side h2 { margin: 0; height: 29px; border-bottom: 1px solid #d4d4d4; font: 400 12px/27px "Liberation Sans", sans-serif; padding-left: 11px; color: #333; }
.side ul { list-style: none; margin: 0; padding: 8px 0 0 22px; }
.side li { height: 41px; display: flex; align-items: flex-start; line-height: 41px; color: #0d83cc; font-size: 12px; letter-spacing: -.3px; }
.side li svg { width: 26px; height: 26px; margin: 10px 7px 0 0; }
.side li.wide svg { margin-right: 6px; }
.main { margin-left: 15px; width: 1077px; border-left: 1px solid #ccc; padding-left: 15px; }
.filters { display: flex; height: 47px; }
.filters h1 { margin: 0; width: 135px; font-size: 13px; line-height: 44px; font-weight: 400; color: #444; letter-spacing: .08px; -webkit-text-stroke: .2px #444; }
.round { width: 24px; height: 24px; margin-top: 10px; }
.funnel { width: 43px; height: 27px; margin-top: 9px; margin-left: -1px; background: #fff; border: 1px solid #ccc; border-radius: 3px; display: flex; align-items: center; justify-content: center; }
.funnel svg { width: 24px; height: 12px; }
.fields { margin-left: 8px; font-size: 10px; color: #333; letter-spacing: -.12px; }
.line { display: flex; align-items: center; height: 23px; }
.line label { margin-top: -1px; }
.l1 { width: 59px; letter-spacing: -.3px; } .l2 { width: 44px; } .l3 { width: 86px; } .l4 { width: 49px; } .l5 { width: 51px; letter-spacing: -.35px; } .l6 { width: 33px; }
.sel { height: 23px; border: 1px solid #ccc; border-radius: 3px; background: #fafafa; display: flex; align-items: center; padding-left: 7px; padding-bottom: 1px; margin-right: 9px; }
.sel::after { content: ""; margin-left: auto; margin-right: 4px; border: 3.500px solid transparent; border-top: 7px solid #222; border-bottom: 0; }
.s1, .s2 { width: 157px; background: #fff; color: #000; }
.s3 { width: 84px; } .s4 { width: 42px; } .s5 { width: 107px; }
.num { width: 67px; height: 14px; border: 1px solid #c8c8c8; text-align: right; line-height: 12px; padding-right: 1px; background: #fff; margin-top: -2px; }
.plusc { width: 9px; height: 9px; margin-left: 0; margin-top: 2px; }
.actions { display: flex; padding: 1px 0 0 2px; height: 46px; gap: 5px; align-items: flex-start; }
.red { width: 103px; height: 26px; background: #d9534f; border: 1px solid #d43f3a; border-radius: 3px; color: #fff; font: 700 11px "Liberation Sans", sans-serif; letter-spacing: -.3px; padding-bottom: 2px; }
.green { width: 121px; height: 23px; margin-top: 1px; border: 0; background: #00813f; color: #fff; font: 700 11px "Liberation Sans", sans-serif; letter-spacing: -.05px; display: flex; align-items: center; padding-left: 4px; }
.green svg { width: 20px; height: 18px; margin-right: 6px; }
.grid { padding-left: 2px; font-size: 9.800px; letter-spacing: .02px; }
.row { height: 23px; display: grid; grid-template-columns: 25px 93px 61px 105px 68px 73px 59px 186px 83px 31px 66px 69px 93px 47px; align-items: center; }
.row:nth-child(odd) { background: #efefef; }
.row.head { height: 26px; background: #f1f1f1; -webkit-text-stroke: .3px #000; font-size: 10px; letter-spacing: -.05px; padding-bottom: 2px; }
.head .r { padding-right: 2px; letter-spacing: .05px; }
.c-op { text-align: right; padding-right: 1px; }
.c-op i { display: inline-block; border: 3px solid transparent; border-top-color: #000; border-bottom: 0; vertical-align: 1px; margin-left: 1px; }
.r { text-align: right; }
.t { padding-left: 7px; }
.in { padding-left: 6px; }
.ing { grid-column: 12; }
.link { color: #0d83cc; letter-spacing: -.4px; }
.rut { letter-spacing: -.2px; }
.name { letter-spacing: -.4px; }
.plus { width: 21px; height: 20px; margin-left: 4px; border: 1px solid #c4c4c4; border-radius: 3px; background: linear-gradient(#333, #333) 50% 50% / 8px 2px no-repeat, linear-gradient(#333, #333) 50% 50% / 2px 8px no-repeat, linear-gradient(#fff, #e6e6e6); }
.chk { width: 9px; height: 9px; border: 1px solid #c8c8c8; border-radius: 1px; background: #eee; margin: -7px 0 0 10px; }

.vscroll, .hscroll { background: #f1f1f1; display: flex; align-items: center; }
.vscroll { flex-direction: column; border-top: 1px solid #a9a9a9; }
.vscroll b { width: 13px; height: 482px; background: #c1c1c1; margin-top: 6px; }
.hscroll b { width: 451px; height: 13px; background: #c1c1c1; margin-left: 6px; }
.corner { background: #dcdcdc; }
.au, .ad, .al, .ar { border: 4px solid transparent; width: 0; height: 0; }
.au { border-bottom-color: #a0a0a0; border-top: 0; margin-top: 7px; }
.ad { border-top-color: #555; border-bottom: 0; margin-top: auto; margin-bottom: 7px; }
.al { border-right-color: #a0a0a0; border-left: 0; margin-left: 7px; }
.ar { border-left-color: #555; border-right: 0; margin-left: auto; margin-right: 7px; }

/* save dialog */
.dialog { position: absolute; left: 187px; top: 364px; width: 953px; height: 308px; border: 1px solid #1883d7; background: #f0f0f0; box-shadow: 0 3px 14px rgba(0,0,0,.45); letter-spacing: -.3px; }
.dtitle { height: 33px; background: #fff; display: flex; align-items: center; padding: 0 9px 4px 9px; letter-spacing: -.35px; }
.dchrome { width: 14px; height: 14px; margin-right: 6px; }
.dclose { width: 12px; height: 12px; margin-left: auto; }
.dnav { height: 32px; background: #fff; display: flex; padding-top: 3px; align-items: flex-start; color: #191919; }
.arrows { width: 88px; height: 24px; margin-left: 12px; margin-top: -1px; }
.crumbs { width: 599px; height: 22px; border: 1px solid #d9d9d9; margin-left: 6px; display: flex; align-items: center; padding-left: 4px; line-height: 19px; }
.crumbs span { padding-bottom: 1px; }
.folder { width: 14px; height: 17px; margin-right: 7px; }
.ch { width: 6px; height: 10px; margin-right: 8px; }
.c1 { width: 70px; letter-spacing: -.4px; } .c2 { width: 58px; letter-spacing: -.4px; } .c3 { width: 59px; } .c4 { width: 156px; letter-spacing: -.38px; }
.cd { width: 10px; height: 6px; margin-left: auto; margin-right: 4px; color: #666; }
.refresh { width: 21px; height: 22px; border: 1px solid #d9d9d9; border-left: 0; padding: 5px 0 0 4px; }
.refresh svg { width: 12px; height: 12px; }
.search { width: 202px; height: 22px; border: 1px solid #d9d9d9; margin-left: 11px; color: #6d6d6d; display: flex; align-items: center; padding: 0 8px; line-height: 18px; letter-spacing: -.5px; }
.search svg { width: 12px; height: 12px; margin-left: auto; }
.dtools { height: 31px; background: #f5f6f7; border-bottom: 1px solid #e4e7ea; display: flex; align-items: center; color: #1e395b; padding-left: 18px; }
.org { width: 56px; }
.tri { border: 4px solid transparent; border-top-color: #1e395b; border-bottom: 0; }
.org + .tri { margin-left: 1px; }
.newf { margin-left: 30px; letter-spacing: -.4px; }
.views { width: 18px; height: 14px; margin-left: auto; margin-right: 8px; }
.help { width: 16px; height: 16px; border-radius: 50%; background: #0067c0; color: #fff; font-weight: 700; text-align: center; line-height: 16px; margin: 0 15px 0 30px; }
.dbody { height: 93px; background: #fff; display: flex; }
.tree { width: 268px; overflow: hidden; }
.tree div { height: 24px; display: flex; align-items: center; padding-left: 32px; line-height: 22px; }
.tree svg { width: 16px; height: 16px; margin-right: 5px; }
.tree .sel-row { background: #d9d9d9; }
.wscroll { width: 17px; background: #f0f0f0; display: flex; flex-direction: column; align-items: center; padding: 6px 0; color: #505050; }
.wscroll svg { width: 9px; height: 6px; }
.wscroll b { width: 15px; background: #cdcdcd; }
.wscroll .bot { margin-top: auto; }
.t1 b { height: 17px; margin-top: 30px; }
.t2 b { height: 34px; margin-top: 5px; }
.t2 { width: 15px; }
.files { width: 649px; border-left: 1px solid #eee; margin-left: 1px; position: relative; }
.sort { position: absolute; left: 139px; top: 0; width: 9px; height: 5px; color: #666; }
.fh, .fr { display: grid; grid-template-columns: 274px 120px 120px 80px; }
.fh { color: #4c607a; line-height: 25px; height: 31px; letter-spacing: -.2px; }
.fh span { border-right: 1px solid #e5e5e5; height: 25px; padding-left: 6px; }
.fh span:first-child { padding-left: 19px; }
.fr { height: 21px; align-items: center; color: #6d6d6d; }
.fr span { padding-left: 6px; letter-spacing: -.22px; }
.fr span.dt { letter-spacing: -.55px; }
.fr span:first-child { padding-left: 20px; display: flex; align-items: center; color: #000; letter-spacing: -.38px; }
.fr span:last-child { text-align: right; padding-right: 7px; letter-spacing: -.5px; }
.fr svg { width: 16px; height: 16px; margin-right: 4px; }
.dform { display: grid; grid-template-columns: 125px 821px; grid-template-rows: 23px 23px; row-gap: 2px; padding-top: 11px; align-items: center; letter-spacing: -.3px; }
.dform label { text-align: right; padding-right: 5px; }
.inp { height: 23px; border: 1px solid #adadad; display: flex; align-items: center; padding: 0 4px 0 3px; background: #e1e1e1; letter-spacing: -.32px; }
.inp.focus { background: #fff; border-color: #0078d7; padding-left: 5px; padding-bottom: 1px; letter-spacing: -.43px; }
.inp mark { background: #0078d7; color: #fff; line-height: 15px; border-right: 1px solid #ff8728; }
.inp svg { width: 9px; height: 6px; margin-left: auto; color: #444; }
.dfoot { display: flex; align-items: center; height: 66px; padding: 0 18px 0 13px; }
.hidec { width: 9px; height: 6px; margin: 5px 8px 0 0; color: #333; }
.dfoot span { margin: 4px auto 0 0; letter-spacing: -.4px; }
.dfoot button { width: 86px; height: 24px; background: #e1e1e1; border: 1px solid #adadad; font-size: 12px; margin-left: 14px; letter-spacing: -.3px; }
.dfoot .prim { border: 2px solid #0078d7; }
.grip { position: absolute; right: 3px; bottom: 2px; width: 8px; height: 8px; }

/* taskbar */
.taskbar { height: 40px; background: #2b2f33; display: flex; color: #fff; }
.slot { width: 49px; height: 40px; display: flex; align-items: center; justify-content: center; position: relative; }
.slot svg { width: 16px; height: 16px; }
.slot.s { padding-right: 4px; }
.slot.big svg { width: 23px; height: 23px; }
.slot.run::after, .slot.on::after { content: ""; position: absolute; left: 4px; right: 5px; bottom: 0; height: 2px; background: #76b9ed; }
.slot.more::after { background: linear-gradient(90deg, #76b9ed 31px, #2b2f33 31px, #2b2f33 32px, #5c8db5 32px); }
.slot.on { background: #55595d; width: 48px; margin-right: 1px; }
.slot.on::after { left: 0; right: 0; }
.tray { flex: 1; display: flex; align-items: center; padding-left: 272px; }
.tq { width: 32px; height: 32px; }
.tp { width: 16px; height: 16px; margin-left: 16px; }
.tu { width: 12px; height: 8px; margin-left: 22px; }
.to { width: 17px; height: 11px; margin-left: 9px; }
.ti { width: 16px; height: 12px; margin-left: 7px; }
.lang { width: 20px; margin-left: 13px; font-size: 11.500px; letter-spacing: -.5px; }
.clock { width: 68px; margin-left: 11px; text-align: center; line-height: 18px; letter-spacing: -.45px; padding-bottom: 2px; }
.tn { width: 16px; height: 16px; margin-left: 13px; }
```
